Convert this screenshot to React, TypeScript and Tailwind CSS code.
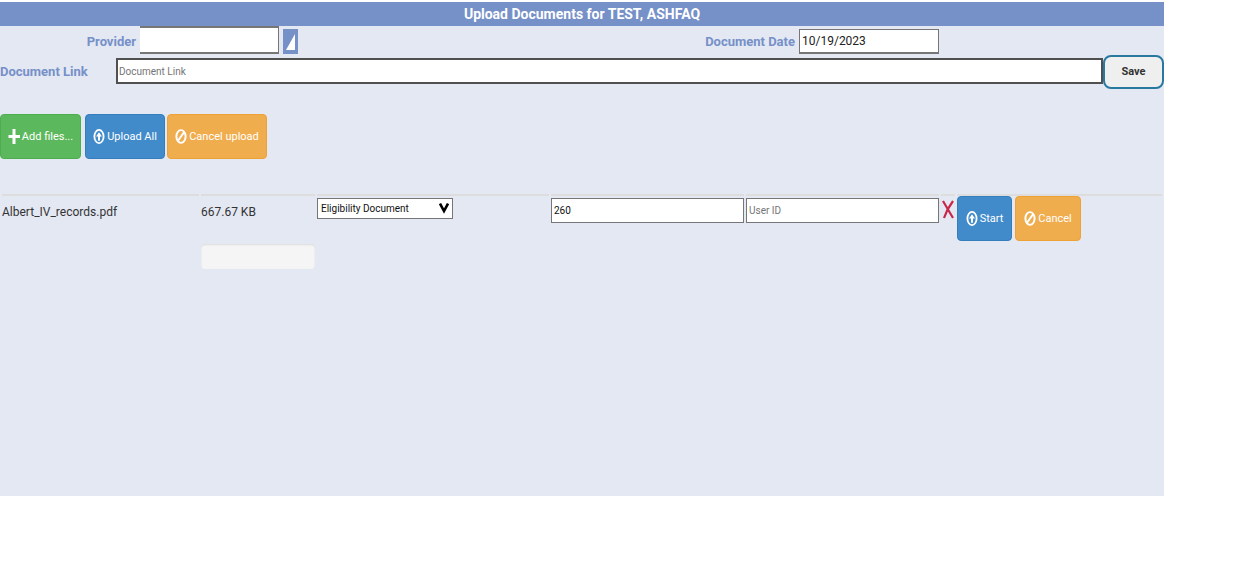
import React from 'react';

const UploadIcon = () => (
  <svg className="w-3 h-[15px] shrink-0" viewBox="0 0 12 16" preserveAspectRatio="none" fill="none" aria-hidden="true">
    <ellipse cx="6" cy="8" rx="4.6" ry="7" stroke="currentColor" strokeWidth="1.8" />
    <path d="M6 3.5 9 8H7v4.5H5V8H3Z" fill="currentColor" />
  </svg>
);

const BanIcon = () => (
  <svg className="w-3 h-[15px] shrink-0" viewBox="0 0 12 16" preserveAspectRatio="none" fill="none" aria-hidden="true">
    <ellipse cx="6" cy="8" rx="4.6" ry="6.8" stroke="currentColor" strokeWidth="2" />
    <path d="M9 3.5 3 12.5" stroke="currentColor" strokeWidth="2" />
  </svg>
);

const PlusIcon = () => (
  <svg className="w-3 h-[15px] shrink-0" viewBox="0 0 12 15" aria-hidden="true">
    <path d="M4.5 0h3v6H12v3H7.5v6h-3V9H0.5V6h4Z" fill="currentColor" />
  </svg>
);

const btn = 'h-[45px] flex items-center justify-center gap-0.5 rounded border text-white text-[11px] leading-4 whitespace-nowrap';
const blue = 'bg-[#428bca] border-[#357ebd]';
const orange = 'bg-[#f0ad4e] border-[#eea236]';
const field = 'block bg-white border border-[#767676] text-[10px] text-[#111] placeholder:text-[#757575] px-0.5 min-w-0';
const label = 'font-bold text-[13px] text-[#7690c8] whitespace-nowrap';
const cell = 'border-t-2 border-[#ddd] p-0 align-top';

export default function App() {
  return (
    <main className="mt-0.5 mr-[87px] min-h-[494px] bg-[#e4e8f3] text-[#333] font-[Roboto,'Liberation_Sans',sans-serif]">
      <h1 className="h-6 bg-[#7690c8] text-white text-center text-sm leading-6 font-bold">
        Upload Documents for TEST, ASHFAQ
      </h1>

      {/* Provider and date */}
      <div className="grid grid-cols-2 h-[29px]">
        <div className="flex items-start">
          <label htmlFor="provider" className={`${label} w-[140px] pr-1 text-right leading-8`}>Provider</label>
          <input id="provider" className="w-[139px] h-7 bg-white border-y-2 border-r border-[#767676] px-0.5 text-xs" />
          <button aria-label="Find provider" className="ml-1 mt-[3px] w-[15px] h-[25px] bg-[#7690c8] flex items-center justify-center">
            <svg className="w-[9px] h-4" viewBox="0 0 9 16" aria-hidden="true">
              <path d="M9 0v16H0Z" fill="#fff" />
            </svg>
          </button>
        </div>
        <div className="flex items-start">
          <label htmlFor="date" className={`${label} w-[217px] pr-1 text-right leading-8`}>Document Date</label>
          <input id="date" defaultValue="10/19/2023" className="mt-[3px] w-[140px] h-[25px] bg-white border border-b-2 border-[#767676] px-0.5 text-xs text-[#222]" />
        </div>
      </div>

      {/* Document link */}
      <div className="flex items-start">
        <label htmlFor="link" className={`${label} w-[116px] leading-[34px]`}>Document Link</label>
        <input id="link" placeholder="Document Link" className="mt-[3px] flex-1 min-w-0 h-[26px] bg-white border-2 border-[#505050] px-px text-[10px] placeholder:text-[#757575]" />
        <button className="w-[61px] h-[34px] rounded-lg border-2 border-[#2878a0] bg-[#efefef] font-bold text-[11px]">Save</button>
      </div>

      {/* Upload actions */}
      <div className="flex mt-[25px]">
        <button className={`${btn} w-[81px] bg-[#5cb85c] border-[#4cae4c]`}><PlusIcon />Add files...</button>
        <button className={`${btn} ${blue} w-20 ml-1`}><UploadIcon />Upload All</button>
        <button className={`${btn} ${orange} w-[100px] ml-0.5`}><BanIcon />Cancel upload</button>
      </div>

      {/* Queued files */}
      <table className="mt-[34px] w-full table-fixed border-separate border-spacing-x-0.5 border-spacing-y-px">
        <colgroup>
          <col className="w-[197px]" />
          <col className="w-[114px]" />
          <col className="w-[232px]" />
          <col className="w-[193px]" />
          <col className="w-[193px]" />
          <col className="w-[14px]" />
          <col />
        </colgroup>
        <tbody>
          <tr>
            <td className={`${cell} text-xs leading-8`}>Albert_IV_records.pdf</td>
            <td className={cell}>
              <p className="text-xs leading-8">667.67 KB</p>
              <div role="progressbar" aria-label="Upload progress" className="mt-4 h-[25px] rounded bg-[#f5f5f5] shadow-[inset_0_1px_2px_rgba(0,0,0,0.1)]" />
            </td>
            <td className={cell}>
              <div className="relative mt-0.5 w-[136px] h-[21px]">
                <select aria-label="Document type" className={`${field} w-full h-full appearance-none pl-[3px] leading-4`}>
                  <option>Eligibility Document</option>
                </select>
                <svg className="absolute right-1 top-1 w-2.5 h-3 pointer-events-none" viewBox="0 0 10 12" fill="none" aria-hidden="true">
                  <path d="M1 1.5 5 9l4-7.5" stroke="#000" strokeWidth="2.6" />
                </svg>
              </div>
            </td>
            <td className={cell}>
              <input aria-label="Document number" defaultValue="260" className={`${field} mt-0.5 w-full h-[25px]`} />
            </td>
            <td className={cell}>
              <input aria-label="User ID" placeholder="User ID" className={`${field} mt-0.5 w-full h-[25px]`} />
            </td>
            <td className={cell}>
              <button aria-label="Remove file" className="block mt-1 mx-auto">
                <svg className="w-3 h-5" viewBox="0 0 12 20" fill="none" aria-hidden="true">
                  <path d="M1 1 11 18M11 1C8 5 4 12 2 18" stroke="#c8284a" strokeWidth="2.2" />
                </svg>
              </button>
            </td>
            <td className={cell}>
              <div className="flex gap-[3px]">
                <button className={`${btn} ${blue} w-[55px]`}><UploadIcon />Start</button>
                <button className={`${btn} ${orange} w-[66px]`}><BanIcon />Cancel</button>
              </div>
            </td>
          </tr>
        </tbody>
      </table>
    </main>
  );
}
